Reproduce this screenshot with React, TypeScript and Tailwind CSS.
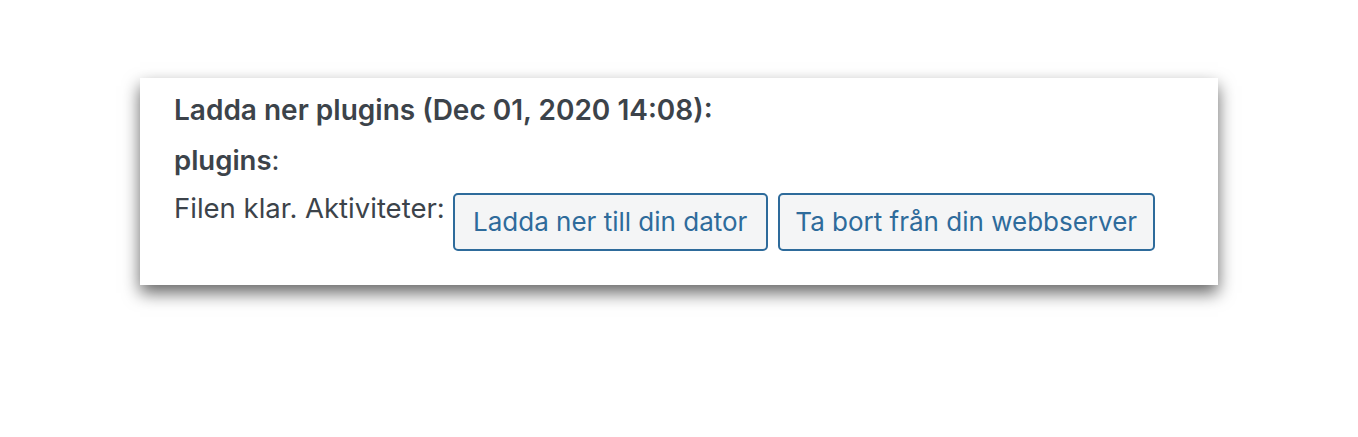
export default function App() {
  return (
    <div className="w-[1358px] h-[437px] bg-white pt-[78px] pl-[140px]" style={{ fontFamily: 'Inter, "Noto Sans", sans-serif' }}>
      <div className="w-[1078px] h-[207px] bg-white shadow-[0_8px_16px_rgba(0,0,0,0.6)] pt-[16px] pl-[34px] text-[#3c434a]">
        <div className="text-[28px] leading-[32px] font-semibold">Ladda ner plugins (Dec 01, 2020 14:08):</div>
        <div className="mt-[18px] text-[27.5px] leading-[32px]"><span className="font-semibold">plugins</span>:</div>
        <div className="mt-[16px] flex items-start text-[27.5px] leading-[32px]">
          <span>Filen klar. Aktiviteter:</span>
          <button className="ml-[8px] mt-[1px] w-[315px] h-[58px] rounded-[5px] border-2 border-[#2e6b9b] bg-[#f4f5f6] text-[#2e6b9b] text-[26px] leading-[32px] flex items-center justify-center">Ladda ner till din dator</button>
          <button className="ml-[10px] mt-[1px] w-[377px] h-[58px] rounded-[5px] border-2 border-[#2e6b9b] bg-[#f4f5f6] text-[#2e6b9b] text-[26px] leading-[32px] flex items-center justify-center">Ta bort från din webbserver</button>
        </div>
      </div>
    </div>
  );
}
